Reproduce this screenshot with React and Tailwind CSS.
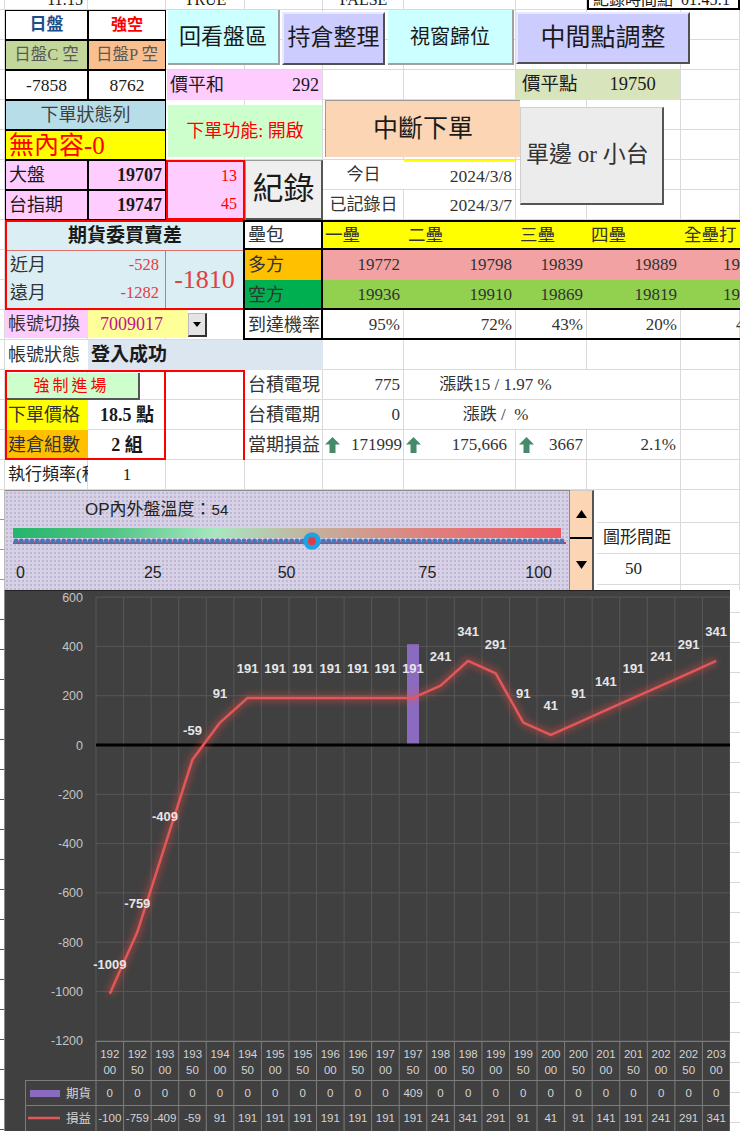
import React from "react";

const GRID =
  "grid grid-cols-[5px_83px_78px_79px_78px_81px_112px_71px_94px_59px] grid-rows-[10px_repeat(16,30px)]";
const SANS = "font-['Liberation_Sans','Noto_Sans_CJK_TC',sans-serif]";

function Cut({ className = "", children }) {
  return (
    <div className={"overflow-hidden " + className}>
      <div className="-mt-[10px] leading-[20px] text-[16px] whitespace-nowrap">{children}</div>
    </div>
  );
}

function Up() {
  return (
    <svg width="15" height="16" viewBox="0 0 15 16" className="shrink-0">
      <path d="M7.5 0L15 7.5H10.5V16H4.5V7.5H0Z" fill="#458a6a" />
    </svg>
  );
}

function TopSheet() {
  return (
    <div className="grid">
      <div className={"col-start-1 row-start-1 " + GRID}>
        {Array.from({ length: 170 }).map((_, i) => (
          <div key={i} className="border-r border-b border-[#dadada]" />
        ))}
      </div>
      <div className={"col-start-1 row-start-1 " + GRID}>
        {/* row 1 cut */}
        <Cut className="col-start-2 row-start-1 text-right pr-[5px]">11:15</Cut>
        <Cut className="col-start-4 row-start-1 text-center">TRUE</Cut>
        <Cut className="col-start-6 row-start-1 text-center">FALSE</Cut>
        <Cut className="col-start-9 col-span-2 row-start-1 border-x-2 border-b-2 border-black bg-white pl-[4px]">
          紀錄時間點&nbsp;&nbsp;01:45:1
        </Cut>

        {/* A-B block */}
        <div className="col-start-2 row-start-2 flex items-center justify-center border border-black bg-white text-[#1f4e8c] font-bold text-[17px]">日盤</div>
        <div className="col-start-3 row-start-2 flex items-center justify-center border border-black bg-white text-[#ff0000] font-bold text-[16px]">強空</div>
        <div className="col-start-2 row-start-3 flex items-center justify-center border border-black bg-[#c4d79b] text-[#595959] text-[16.5px] whitespace-nowrap">日盤C 空</div>
        <div className="col-start-3 row-start-3 flex items-center justify-center border border-black bg-[#fabf8f] text-[#595959] text-[16.5px] whitespace-nowrap">日盤P 空</div>
        <div className="col-start-2 row-start-4 flex items-center justify-center border border-black bg-white text-[17.5px]">-7858</div>
        <div className="col-start-3 row-start-4 flex items-center justify-center border border-black bg-white text-[17.5px]">8762</div>

        {/* top buttons */}
        <div className="col-start-4 col-span-2 row-start-2 row-span-2 ml-[2px] mr-[43px] mb-[5px] flex items-center justify-center bg-[#ccffff] border-r-2 border-b-2 border-[#a0a0a0] text-[22px] whitespace-nowrap">回看盤區</div>
        <div className="col-start-5 col-span-2 row-start-2 row-span-2 ml-[37px] mr-[19px] mt-[2px] mb-[5px] flex items-center justify-center bg-[#ccccff] border-2 border-t-[#e8e8ff] border-l-[#e8e8ff] border-r-[#505050] border-b-[#505050] text-[23px] whitespace-nowrap">持倉整理</div>
        <div className="col-start-6 col-span-2 row-start-2 row-span-2 ml-[65px] mr-[2px] mb-[5px] flex items-center justify-center bg-[#ccffff] border-r-2 border-b-2 border-[#a0a0a0] text-[20px] whitespace-nowrap">視窗歸位</div>
        <div className="col-start-8 col-span-3 row-start-2 row-span-2 mr-[50px] mt-[2px] mb-[6px] flex items-center justify-center bg-[#ccccff] border-2 border-t-[#e8e8ff] border-l-[#e8e8ff] border-r-[#505050] border-b-[#505050] text-[25px] whitespace-nowrap">中間點調整</div>

        {/* row 4 */}
        <div className="col-start-4 col-span-2 row-start-4 mr-[1px] ml-[1px] flex items-center justify-between px-[3px] bg-[#ffccff] text-[18px]">
          <span>價平和</span>
          <span>292</span>
        </div>
        <div className="col-start-8 col-span-2 row-start-4 mr-[1px] flex items-center bg-[#d8e4bc] text-[18.5px] pl-[6px]">
          <span>價平點</span>
          <span className="ml-[32px]">19750</span>
        </div>

        {/* rows 5-6 */}
        <div className="col-start-2 col-span-2 row-start-5 flex items-center justify-center border border-black bg-[#b7dee8] text-[#404040] text-[18px]">下單狀態列</div>
        <div className="col-start-2 col-span-2 row-start-6 flex items-center pl-[3px] border border-black bg-[#ffff00] text-[#ff0000] text-[25px] leading-none whitespace-nowrap">無內容-0</div>
        <div className="col-start-4 col-span-2 row-start-5 row-span-2 ml-[2px] mr-[1px] mt-[5px] mb-[3px] flex items-center justify-center bg-[#ccffcc] text-[#ff0000] text-[18px] whitespace-nowrap">下單功能: 開啟</div>
        <div className="col-start-6 col-span-3 row-start-5 row-span-2 ml-[2px] mr-[67px] mb-[3px] flex items-center justify-center bg-[#fcd5b4] border-t border-l border-[#9a9a9a] text-[25px] whitespace-nowrap">中斷下單</div>

        {/* rows 7-8 */}
        <div className="col-start-2 row-start-7 flex items-center pl-[3px] border border-black bg-[#ffccff] text-[18px]">大盤</div>
        <div className="col-start-3 row-start-7 flex items-center justify-end pr-[3px] border border-black bg-[#ffccff] font-bold text-[18px]">19707</div>
        <div className="col-start-2 row-start-8 flex items-center pl-[3px] border border-black bg-[#ffccff] text-[18px]">台指期</div>
        <div className="col-start-3 row-start-8 flex items-center justify-end pr-[3px] border border-black bg-[#ffccff] font-bold text-[18px]">19747</div>
        <div className="col-start-4 row-start-7 row-span-2 flex flex-col border-2 border-[#ff0000] bg-[#ffccff] text-[#ff0000] text-[16px]">
          <div className="flex-1 flex items-center justify-end pr-[6px]">13</div>
          <div className="flex-1 flex items-center justify-end pr-[6px]">45</div>
        </div>
        <div className="col-start-5 row-start-7 row-span-2 flex items-center justify-center bg-[#efefef] border border-[#9a9a9a] border-r-2 border-b-2 border-r-[#555] border-b-[#555] text-[31px] whitespace-nowrap">紀錄</div>
        <div className="col-start-6 row-start-7 flex items-center justify-center text-[17px] text-[#333] bg-white border-b border-[#dadada]">今日</div>
        <div className="col-start-7 row-start-7 flex items-center justify-end pr-[4px] text-[17.5px] text-[#333] border-t-2 border-[#ffff00]">2024/3/8</div>
        <div className="col-start-6 row-start-8 flex items-center justify-center text-[17px] text-[#333] whitespace-nowrap">已記錄日</div>
        <div className="col-start-7 row-start-8 flex items-center justify-end pr-[4px] text-[17.5px] text-[#333]">2024/3/7</div>

        {/* single side button */}
        <div className="col-start-8 col-span-2 row-start-5 row-span-4 ml-[4px] mr-[17px] mt-[7px] mb-[15px] flex items-center justify-start pl-[5px] overflow-hidden bg-[#ececec] border border-[#cfcfcf] border-r-2 border-b-2 border-r-[#555] border-b-[#555] text-[23px] text-[#333] whitespace-nowrap">單邊 or 小台</div>

        {/* rows 9-11 left block */}
        <div className="col-start-2 col-span-3 row-start-9 row-span-3 flex flex-col border-2 border-[#ff0000] bg-[#daeef3]">
          <div className="h-[29px] flex items-center justify-center font-bold text-[19px] border-b border-[#e07070]">期貨委買賣差</div>
          <div className="flex-1 flex">
            <div className="w-[159px] flex flex-col border-r border-[#e07070]">
              <div className="flex-1 flex items-center justify-between pl-[3px] pr-[6px]">
                <span className="text-[18px] text-[#333]">近月</span>
                <span className="text-[16.5px] text-[#e04040]">-528</span>
              </div>
              <div className="flex-1 flex items-center justify-between pl-[3px] pr-[6px]">
                <span className="text-[18px] text-[#333]">遠月</span>
                <span className="text-[16.5px] text-[#e04040]">-1282</span>
              </div>
            </div>
            <div className="flex-1 flex items-center justify-center text-[26px] text-[#e04040]">-1810</div>
          </div>
        </div>

        {/* bases table */}
        <div className="col-start-5 row-start-9 flex items-center pl-[3px] bg-white text-[18px] text-[#333]">壘包</div>
        <div className="col-start-6 row-start-9 flex items-center pl-[2px] bg-[#ffff00] text-[17.5px] text-[#333]">一壘</div>
        <div className="col-start-7 row-start-9 flex items-center pl-[4px] bg-[#ffff00] text-[17.5px] text-[#333]">二壘</div>
        <div className="col-start-8 row-start-9 flex items-center pl-[4px] bg-[#ffff00] text-[17.5px] text-[#333]">三壘</div>
        <div className="col-start-9 row-start-9 flex items-center pl-[4px] bg-[#ffff00] text-[17.5px] text-[#333]">四壘</div>
        <div className="col-start-10 row-start-9 flex items-center pl-[3px] overflow-hidden whitespace-nowrap bg-[#ffff00] text-[17.5px] text-[#333]">全壘打</div>

        <div className="col-start-5 row-start-10 flex items-center pl-[3px] bg-[#ffc000] text-[18px] text-[#333]">多方</div>
        <div className="col-start-6 row-start-10 flex items-center justify-end pr-[4px] bg-[#f2a2a2] text-[17px] text-[#333]">19772</div>
        <div className="col-start-7 row-start-10 flex items-center justify-end pr-[4px] bg-[#f2a2a2] text-[17px] text-[#333]">19798</div>
        <div className="col-start-8 row-start-10 flex items-center justify-end pr-[4px] bg-[#f2a2a2] text-[17px] text-[#333]">19839</div>
        <div className="col-start-9 row-start-10 flex items-center justify-end pr-[4px] bg-[#f2a2a2] text-[17px] text-[#333]">19889</div>
        <div className="col-start-10 row-start-10 flex items-center pl-[42px] overflow-hidden whitespace-nowrap bg-[#f2a2a2] text-[17px] text-[#333]">19939</div>

        <div className="col-start-5 row-start-11 flex items-center pl-[3px] bg-[#00b050] text-[18px] text-[#333]">空方</div>
        <div className="col-start-6 row-start-11 flex items-center justify-end pr-[4px] bg-[#92d050] text-[17px] text-[#333]">19936</div>
        <div className="col-start-7 row-start-11 flex items-center justify-end pr-[4px] bg-[#92d050] text-[17px] text-[#333]">19910</div>
        <div className="col-start-8 row-start-11 flex items-center justify-end pr-[4px] bg-[#92d050] text-[17px] text-[#333]">19869</div>
        <div className="col-start-9 row-start-11 flex items-center justify-end pr-[4px] bg-[#92d050] text-[17px] text-[#333]">19819</div>
        <div className="col-start-10 row-start-11 flex items-center pl-[42px] overflow-hidden whitespace-nowrap bg-[#92d050] text-[17px] text-[#333]">19769</div>

        <div className="col-start-5 row-start-12 flex items-center pl-[3px] text-[18px] text-[#333] whitespace-nowrap">到達機率</div>
        <div className="col-start-6 row-start-12 flex items-center justify-end pr-[4px] text-[17px] text-[#333]">95%</div>
        <div className="col-start-7 row-start-12 flex items-center justify-end pr-[4px] text-[17px] text-[#333]">72%</div>
        <div className="col-start-8 row-start-12 flex items-center justify-end pr-[4px] text-[17px] text-[#333]">43%</div>
        <div className="col-start-9 row-start-12 flex items-center justify-end pr-[4px] text-[17px] text-[#333]">20%</div>
        <div className="col-start-10 row-start-12 flex items-center pl-[55px] overflow-hidden whitespace-nowrap text-[17px] text-[#333]">4%</div>

        {/* table borders */}
        <div className="col-start-5 col-span-6 row-start-9 row-span-4 -ml-[2px] border-2 border-r-0 border-black pointer-events-none" />
        <div className="col-start-5 row-start-9 row-span-4 border-r-2 border-black pointer-events-none" />
        <div className="col-start-5 col-span-6 row-start-9 -ml-[2px] border-b-2 border-black pointer-events-none" />
        <div className="col-start-5 col-span-6 row-start-11 -ml-[2px] border-b-2 border-black pointer-events-none" />

        {/* account rows */}
        <div className="col-start-2 row-start-12 flex items-center pl-[3px] mb-[2px] bg-[#ffccff] text-[18px] text-[#333] whitespace-nowrap">帳號切換</div>
        <div className="col-start-3 col-span-2 row-start-12 mr-[57px] mb-[2px] flex items-center pl-[12px] bg-[#ffff99] text-[#c0148c] text-[18px]">7009017</div>
        <div className="col-start-4 row-start-12 ml-[22px] mr-[38px] my-[3px] flex items-center justify-center bg-[#e4e4e4] border border-[#bbb] border-r-2 border-b-2 border-r-[#333] border-b-[#333]">
          <svg width="8" height="5" viewBox="0 0 8 5"><path d="M0 0H8L4 5Z" fill="#000" /></svg>
        </div>
        <div className="col-start-2 row-start-13 flex items-center pl-[3px] bg-white text-[18px] text-[#333] whitespace-nowrap">帳號狀態</div>
        <div className="col-start-3 col-span-3 row-start-13 flex items-center pl-[3px] bg-[#dce6f1] font-bold text-[19px]">登入成功</div>

        {/* force entry */}
        <div className="col-start-2 col-span-2 row-start-14 mr-[26px] mt-[3px] flex items-center justify-center bg-[#ccffcc] border-r-2 border-b-2 border-[#555] text-[#ff0000] text-[16px] tracking-[3px] whitespace-nowrap">強制進場</div>
        <div className="col-start-2 row-start-15 flex items-center pl-[3px] bg-[#ffff00] text-[18px] text-[#333] whitespace-nowrap">下單價格</div>
        <div className="col-start-3 row-start-15 flex items-center justify-center font-bold text-[18px]">18.5 點</div>
        <div className="col-start-2 row-start-16 flex items-center pl-[3px] bg-[#ffc000] text-[18px] text-[#333] whitespace-nowrap">建倉組數</div>
        <div className="col-start-3 row-start-16 flex items-center justify-center font-bold text-[18px]">2 組</div>
        <div className="col-start-2 col-span-2 row-start-14 row-span-3 border-2 border-[#ff0000] pointer-events-none" />
        <div className="col-start-2 col-span-3 row-start-14 row-span-3 border-t-2 border-r-2 border-[#ff0000] pointer-events-none" />
        <div className="col-start-2 row-start-17 flex items-center pl-[3px] overflow-hidden whitespace-nowrap text-[17px] text-[#222]">執行頻率(秒)</div>
        <div className="col-start-3 row-start-17 flex items-center justify-center text-[17px]">1</div>

        {/* right info rows */}
        <div className="col-start-5 row-start-14 flex items-center pl-[3px] text-[18px] text-[#333] whitespace-nowrap">台積電現</div>
        <div className="col-start-6 row-start-14 flex items-center justify-end pr-[4px] text-[17px] text-[#333]">775</div>
        <div className="col-start-7 col-span-2 row-start-14 mb-[1px] flex items-center justify-center bg-white text-[17px] text-[#333] whitespace-nowrap">漲跌15 / 1.97 %</div>
        <div className="col-start-5 row-start-15 flex items-center pl-[3px] text-[18px] text-[#333] whitespace-nowrap">台積電期</div>
        <div className="col-start-6 row-start-15 flex items-center justify-end pr-[4px] text-[17px] text-[#333]">0</div>
        <div className="col-start-7 col-span-2 row-start-15 mb-[1px] flex items-center justify-center bg-white text-[17px] text-[#333] whitespace-pre">漲跌 /  %</div>
        <div className="col-start-5 row-start-16 flex items-center pl-[3px] text-[18px] text-[#333] whitespace-nowrap">當期損益</div>
        <div className="col-start-6 row-start-16 flex items-center justify-between pl-[2px] pr-[2px] text-[17px] text-[#333]"><Up /><span>171999</span></div>
        <div className="col-start-7 row-start-16 flex items-center justify-between pl-[2px] pr-[9px] text-[17px] text-[#333]"><Up /><span>175,666</span></div>
        <div className="col-start-8 row-start-16 flex items-center justify-between pl-[3px] pr-[4px] text-[17px] text-[#333]"><Up /><span>3667</span></div>
        <div className="col-start-9 row-start-16 flex items-center justify-end pr-[5px] text-[17px] text-[#333]">2.1%</div>
      </div>
    </div>
  );
}

function SliderRow() {
  const dots = [];
  for (let x = 3; x < 552; x += 5.3) dots.push(x);
  return (
    <div className="flex h-[100px]">
      <div className="w-[5px] border-r border-[#bbb] bg-[repeating-linear-gradient(#fff_0px,#fff_29px,#999_29px,#999_30px)]" />
      <div className={"w-[565px] flex flex-col border-t border-[#8a8a8a] border-r border-[#8a8a8a] bg-[#d6d1e4] bg-[radial-gradient(circle,#beb6d4_1px,transparent_1.3px)] bg-[size:4px_4px] " + SANS}>
        <div className="h-[37px] pl-[80px] pt-[9px] text-[17px] leading-[20px] text-[#222]">
          OP內外盤溫度：<span className="text-[15px]">54</span>
        </div>
        <div className="mx-[8px] h-[10px] bg-[linear-gradient(to_right,#24b56b,#52c585_18%,#a8e6c0_37%,#c5b09c_55%,#de827e_75%,#ec5a62)]" />
        <svg width="553" height="20" viewBox="0 0 553 20" className="ml-[8px] -mt-[5px] overflow-visible">
          <line x1="0" y1="10" x2="553" y2="10" stroke="#d43a4c" strokeWidth="2" />
          {dots.map((x, i) => (
            <circle key={i} cx={x} cy="8" r="2.5" fill="#4b76b6" />
          ))}
          <circle cx="299" cy="8" r="6.5" fill="#e0404e" stroke="#1ba3e3" strokeWidth="4.5" />
          <circle cx="299" cy="8" r="2.5" fill="#d83a4a" />
        </svg>
        <div className="flex mt-[10px] text-[16px] leading-[20px] text-[#222]">
          <span className="ml-[11px]">0</span>
          <span className="ml-[119px]">25</span>
          <span className="ml-[116px]">50</span>
          <span className="ml-[123px]">75</span>
          <span className="ml-[89px]">100</span>
        </div>
      </div>
      <div className="w-[24px] flex flex-col bg-[#fcd5b4] border-r-2 border-[#555] border-t border-t-[#ccc]">
        <div className="h-[48px] flex items-center justify-center border-b-2 border-black">
          <svg width="11" height="8" viewBox="0 0 11 8"><path d="M5.5 0L11 8H0Z" fill="#000" /></svg>
        </div>
        <div className="flex-1 flex items-center justify-center">
          <svg width="11" height="8" viewBox="0 0 11 8"><path d="M0 0H11L5.5 8Z" fill="#000" /></svg>
        </div>
      </div>
      <div className="w-[3px]" />
      <div className="flex-1 grid grid-cols-[84px_59px] grid-rows-[33px_31px_31px_5px]">
        <div className="border-r border-b border-[#dadada]" />
        <div className="border-r border-b border-[#dadada]" />
        <div className="border-r border-b border-[#dadada] flex items-center pl-[6px] text-[17px] text-[#222] whitespace-nowrap">圖形間距</div>
        <div className="border-r border-b border-[#dadada]" />
        <div className="border-r border-b border-[#dadada] flex items-center pl-[28px] text-[17px] text-[#222]">50</div>
        <div className="border-r border-b border-[#dadada]" />
        <div className="border-r border-[#dadada]" />
        <div className="border-r border-[#dadada]" />
      </div>
    </div>
  );
}

function Chart() {
  const vals = [-1009, -759, -409, -59, 91, 191, 191, 191, 191, 191, 191, 191, 241, 341, 291, 91, 41, 91, 141, 191, 241, 291, 341];
  const fut = vals.map((_, i) => (i === 11 ? 409 : 0));
  const cats = vals.map((_, i) => String(19200 + 50 * i));
  const cw = 634 / 23;
  const X = (i) => 91 + cw * (i + 0.5);
  const Y = (v) => 155 - v * 0.2465;
  const pts = vals.map((v, i) => `${X(i).toFixed(1)},${Y(v).toFixed(1)}`).join(" ");
  const ticks = [600, 400, 200, 0, -200, -400, -600, -800, -1000, -1200];
  const font = "'Liberation Sans','Noto Sans CJK TC',sans-serif";
  return (
    <svg width="725" height="541" viewBox="0 0 725 541" className="block" style={{ fontFamily: font }}>
      <defs>
        <filter id="glow" x="-5%" y="-5%" width="110%" height="110%">
          <feGaussianBlur stdDeviation="3.5" />
        </filter>
      </defs>
      <rect x="0" y="0" width="725" height="541" fill="#404040" />
      <line x1="0" y1="0.5" x2="725" y2="0.5" stroke="#222" />
      {ticks.map((v) => (
        <line key={"h" + v} x1="91" x2="725" y1={Y(v)} y2={Y(v)} stroke="#575757" strokeWidth="1" />
      ))}
      {Array.from({ length: 24 }).map((_, k) => (
        <line key={"v" + k} x1={91 + k * cw} x2={91 + k * cw} y1={Y(600)} y2={451} stroke="#575757" strokeWidth="1" />
      ))}
      {ticks.map((v) => (
        <text key={"t" + v} x="78" y={Y(v) + 4.5} textAnchor="end" fontSize="12.5" fill="#c4c4c4">{v}</text>
      ))}
      <rect x={X(11) - 6} y={Y(409)} width="12" height={Y(0) - Y(409)} fill="#8a6bbf" />
      <line x1="91" x2="725" y1={Y(0)} y2={Y(0)} stroke="#000" strokeWidth="3" />
      <polyline points={pts} fill="none" stroke="#ff4a4a" strokeWidth="7" opacity="0.4" filter="url(#glow)" strokeLinejoin="round" />
      <polyline points={pts} fill="none" stroke="#e05858" strokeWidth="2.5" strokeLinejoin="round" />
      {vals.map((v, i) => (
        <text key={"l" + i} x={X(i)} y={Y(v) - 29 + 4.5} textAnchor="middle" fontSize="13" fontWeight="bold" fill="#e6e6e6">{v}</text>
      ))}
      {/* data table */}
      {Array.from({ length: 24 }).map((_, k) => (
        <line key={"tv" + k} x1={91 + k * cw} x2={91 + k * cw} y1="451" y2="541" stroke="#7c7c7c" />
      ))}
      <line x1="91" x2="725" y1="451.5" y2="451.5" stroke="#7c7c7c" />
      <line x1="20" x2="725" y1="490.5" y2="490.5" stroke="#7c7c7c" />
      <line x1="20" x2="725" y1="515.5" y2="515.5" stroke="#7c7c7c" />
      <line x1="20.5" x2="20.5" y1="490" y2="541" stroke="#7c7c7c" />
      {cats.map((c, i) => (
        <g key={"c" + i}>
          <text x={X(i)} y="468" textAnchor="middle" fontSize="11.5" fill="#d4d4d4">{c.slice(0, 3)}</text>
          <text x={X(i)} y="484" textAnchor="middle" fontSize="11.5" fill="#d4d4d4">{c.slice(3)}</text>
          <text x={X(i)} y="507" textAnchor="middle" fontSize="11.5" fill="#d4d4d4">{fut[i]}</text>
          <text x={X(i)} y="532" textAnchor="middle" fontSize="11.5" fill="#d4d4d4">{i === 0 ? "-100" : vals[i]}</text>
        </g>
      ))}
      <rect x="25" y="500" width="30" height="7" fill="#8a6bbf" />
      <text x="86" y="508" textAnchor="end" fontSize="12.5" fill="#d4d4d4">期貨</text>
      <line x1="23" x2="55" y1="528" y2="528" stroke="#e05858" strokeWidth="2.5" />
      <text x="86" y="533" textAnchor="end" fontSize="12.5" fill="#d4d4d4">損益</text>
    </svg>
  );
}

export default function App() {
  return (
    <div className="w-[740px] h-[1131px] overflow-hidden bg-white text-[#1a1a1a] font-['Liberation_Serif','Noto_Sans_CJK_TC',serif]">
      <TopSheet />
      <SliderRow />
      <div className="flex h-[541px]">
        <div className="w-[5px] border-r border-[#888] bg-[repeating-linear-gradient(#fff_0px,#fff_29px,#555_29px,#555_30px)]" />
        <Chart />
        <div className="flex-1 bg-[repeating-linear-gradient(#fff_0px,#fff_22px,#d8d8d8_22px,#d8d8d8_23px,#fff_23px,#fff_30px)]" />
      </div>
    </div>
  );
}
